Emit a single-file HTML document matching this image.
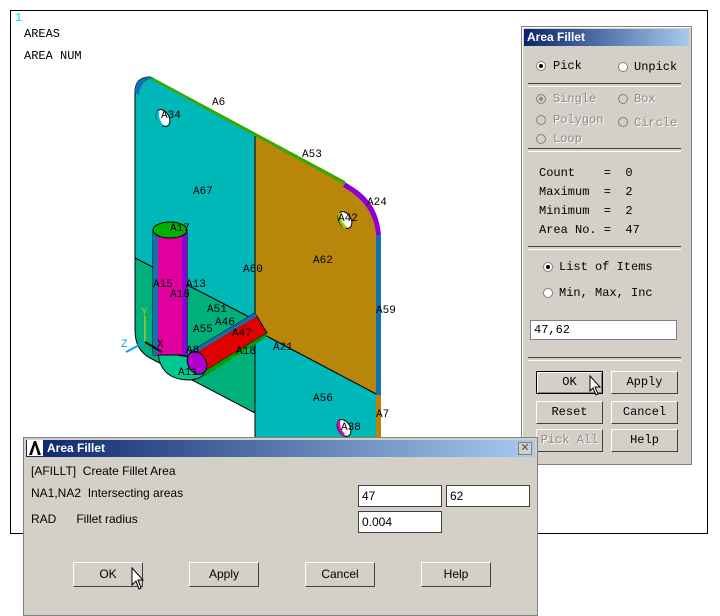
<!DOCTYPE html>
<html><head><style>
body{margin:0;width:720px;height:616px;background:#fff;position:relative;overflow:hidden;font-family:"Liberation Mono",monospace}
.abs{position:absolute}
.panel{left:521px;top:26px;width:169px;height:437px;background:#d4d0c8;border:1px solid #808080;box-shadow:inset 1px 1px #fff}
.ttl{left:2px;top:2px;width:165px;height:17px;background:linear-gradient(90deg,#0a246a,#a6caf0);color:#fff;font:bold 12px "Liberation Sans",sans-serif;line-height:17px;padding-left:3px;box-sizing:border-box}
.m{font:12px "Liberation Mono",monospace;color:#000}
.g{color:#8a8a8a;text-shadow:1px 1px #fff}
.rb{width:10px;height:10px;border-radius:50%;background:#fff;border:1px solid #808080;box-sizing:border-box}
.rb.on::after{content:"";position:absolute;left:2px;top:2px;width:4px;height:4px;border-radius:50%;background:#000}
.rb.gr{background:#d4d0c8}
.rb.gr.on::after{background:#888}
.sep{height:2px;border-top:1px solid #404040;border-bottom:1px solid #fff;left:6px;width:153px}
.btn{width:67px;height:23px;background:#d4d0c8;border:1px solid;border-color:#fff #404040 #404040 #fff;box-sizing:border-box;text-align:center;font:12px "Liberation Mono",monospace;line-height:21px}
.dlg{left:23px;top:437px;width:515px;height:179px;background:#d4d0c8;border:1px solid #808080;box-sizing:border-box}
.s{font:12px "Liberation Sans",sans-serif;color:#000}
.in{background:#fff;border:1px solid #404040;box-sizing:border-box;height:22px;font:12px "Liberation Sans",sans-serif;padding:3px 0 0 3px}
.b2{width:70px;height:25px;background:#d4d0c8;border:1px solid;border-color:#fff #404040 #404040 #fff;box-sizing:border-box;text-align:center;font:12px "Liberation Sans",sans-serif;line-height:23px}
</style></head><body>
<div class="abs" style="left:10px;top:10px;width:698px;height:524px;border:1px solid #000;box-sizing:border-box"></div>
<div class="abs m" style="left:15px;top:11px;color:#00e0e0;font-size:12px">1</div>
<div class="abs m" style="left:24px;top:27px">AREAS</div>
<div class="abs m" style="left:24px;top:49px">AREA NUM</div>
<svg class="abs" style="left:0;top:0" width="720" height="616">
<path d="M135,92 Q135,77 150,77 L255,135 L255,320 L135,258 Z" fill="#00b8b8" stroke="#000" stroke-width="1"/>
<path d="M135,258 L255,320 L255,413 L150,358 Q135,350 135,330 Z" fill="#00b07a" stroke="#000"/>
<path d="M255,135 L345,183 Q376,200 378,235 L378,395 L255,330 Z" fill="#b8860b" stroke="#000"/>
<path d="M255,330 L378,395 L378,445 L255,445 Z" fill="#00b8b8" stroke="#000"/>
<path d="M150,76 L345,181 L347,186 L152,80 Z" fill="#38a800"/>
<path d="M345,183 Q378,198 381,235 L376,235 Q374,204 343,187 Z" fill="#9000d0"/>
<rect x="376" y="235" width="5" height="160" fill="#1070b0"/>
<rect x="376" y="395" width="5" height="45" fill="#c08000"/>
<path d="M135,92 Q135,77 150,77 L154,78 Q140,80 139,95 Z" fill="#1070b0"/>
<ellipse cx="163" cy="118" rx="6" ry="9" transform="rotate(-30 163 118)" fill="#fff" stroke="#000"/>
<path d="M158,112 q-2,6 4,14" stroke="#00b8b8" stroke-width="3" fill="none"/>
<ellipse cx="345" cy="220" rx="6" ry="9" transform="rotate(-30 345 220)" fill="#fff" stroke="#000"/>
<path d="M340,213 q-2,8 6,15" stroke="#a0d000" stroke-width="3" fill="none"/>
<ellipse cx="344" cy="428" rx="6" ry="9" transform="rotate(-30 344 428)" fill="#fff" stroke="#000"/>
<path d="M339,421 q-2,8 5,14" stroke="#e000a0" stroke-width="3" fill="none"/>
<path d="M158,352 Q160,380 190,380 Q210,378 208,360 Z" fill="#00c890" stroke="#000"/>
<rect x="153" y="230" width="34" height="125" fill="#e000a0" stroke="#000"/>
<rect x="153" y="230" width="5" height="125" fill="#1070b0"/>
<rect x="182" y="230" width="5" height="125" fill="#9000d0"/>
<ellipse cx="170" cy="230" rx="17" ry="8" fill="#00b000" stroke="#000"/>
<path d="M190,352 L255,313 L267,333 L203,372 Z" fill="#e00000" stroke="#000"/>
<path d="M190,352 L255,313 L257,316 L192,355Z" fill="#1070b0"/>
<path d="M203,372 L267,333 L265,338 L205,376Z" fill="#00a000"/>
<ellipse cx="197" cy="363" rx="9" ry="12" transform="rotate(-30 197 363)" fill="#b000d0" stroke="#000"/>
<line x1="145" y1="342" x2="145" y2="316" stroke="#e0e000"/>
<line x1="145" y1="342" x2="126" y2="352" stroke="#00a0ff" stroke-width="2"/>
<line x1="145" y1="342" x2="162" y2="352" stroke="#000" stroke-width="2"/>
<g font-family="Liberation Mono,monospace" font-size="11" fill="#000">
<text x="141" y="315" fill="#c0c000">Y</text><text x="121" y="347" fill="#00a0ff">Z</text><text x="157" y="347">X</text>
<text x="212" y="105">A6</text><text x="161" y="118">A34</text><text x="302" y="157">A53</text>
<text x="193" y="194">A67</text><text x="367" y="205">A24</text><text x="338" y="221">A42</text>
<text x="170" y="231">A17</text><text x="243" y="272">A60</text><text x="313" y="263">A62</text>
<text x="153" y="287">A15</text><text x="186" y="287">A13</text><text x="170" y="297">A16</text>
<text x="376" y="313">A59</text><text x="207" y="312">A51</text><text x="193" y="332">A55</text>
<text x="215" y="325">A46</text><text x="232" y="336">A47</text><text x="186" y="353">A8</text>
<text x="236" y="354">A18</text><text x="273" y="350">A21</text><text x="178" y="375">A11</text>
<text x="313" y="401">A56</text><text x="376" y="417">A7</text><text x="341" y="430">A38</text>
</g>
</svg>

<div class="abs panel">
<div class="abs ttl">Area Fillet</div>
<div class="abs rb on" style="left:14px;top:34px"></div><div class="abs m" style="left:31px;top:32px">Pick</div>
<div class="abs rb" style="left:96px;top:35px"></div><div class="abs m" style="left:112px;top:33px">Unpick</div>
<div class="abs sep" style="top:56px"></div>
<div class="abs rb gr on" style="left:14px;top:67px"></div><div class="abs m g" style="left:31px;top:65px">Single</div>
<div class="abs rb gr" style="left:96px;top:67px"></div><div class="abs m g" style="left:112px;top:65px">Box</div>
<div class="abs rb gr" style="left:14px;top:88px"></div><div class="abs m g" style="left:31px;top:86px">Polygon</div>
<div class="abs rb gr" style="left:96px;top:90px"></div><div class="abs m g" style="left:112px;top:89px">Circle</div>
<div class="abs rb gr" style="left:14px;top:107px"></div><div class="abs m g" style="left:31px;top:105px">Loop</div>
<div class="abs sep" style="top:121px"></div>
<div class="abs m" style="left:17px;top:137px;line-height:19px;white-space:pre">Count    =  0
Maximum  =  2
Minimum  =  2
Area No. =  47</div>
<div class="abs sep" style="top:219px"></div>
<div class="abs rb on" style="left:21px;top:235px"></div><div class="abs m" style="left:37px;top:233px">List of Items</div>
<div class="abs rb" style="left:21px;top:261px"></div><div class="abs m" style="left:37px;top:259px">Min, Max, Inc</div>
<div class="abs m" style="left:8px;top:293px;width:147px;height:20px;background:#fff;border:1px solid #808080;box-sizing:border-box;padding:2px 3px">47,62</div>
<div class="abs sep" style="top:330px"></div>
<div class="abs btn" style="left:14px;top:344px;border:1px solid #000;box-shadow:inset 1px 1px #fff,inset -1px -1px #808080">OK</div>
<div class="abs btn" style="left:89px;top:344px">Apply</div>
<div class="abs btn" style="left:14px;top:374px">Reset</div>
<div class="abs btn" style="left:89px;top:374px">Cancel</div>
<div class="abs btn g" style="left:14px;top:402px">Pick All</div>
<div class="abs btn" style="left:89px;top:402px">Help</div>
</div>
<svg class="abs" style="left:589px;top:375px" width="14" height="22"><path d="M1,1 L1,16 L4,13 L7,20 L9,19 L6,12 L11,12 Z" fill="#fff" stroke="#000"/></svg>

<div class="abs dlg">
<div class="abs" style="left:2px;top:2px;width:509px;height:17px;background:linear-gradient(90deg,#0a246a,#a6caf0)"></div>
<div class="abs" style="left:3px;top:2px;width:16px;height:16px;background:#fff"><svg width="16" height="16"><path d="M2,15 L7,1 L9,1 L14,15 L11,15 L8,5 L5,15Z" fill="#000"/></svg></div>
<div class="abs" style="left:23px;top:3px;color:#fff;font:bold 12px 'Liberation Sans',sans-serif">Area Fillet</div>
<div class="abs" style="left:494px;top:4px;width:14px;height:13px;background:#d4d0c8;border:1px solid #808080;box-sizing:border-box;font:11px sans-serif;text-align:center;line-height:11px;color:#555">✕</div>
<div class="abs s" style="left:7px;top:26px">[AFILLT]&nbsp; Create Fillet Area</div>
<div class="abs s" style="left:7px;top:48px">NA1,NA2&nbsp; Intersecting areas</div>
<div class="abs s" style="left:7px;top:74px">RAD&nbsp;&nbsp;&nbsp;&nbsp;&nbsp; Fillet radius</div>
<div class="abs in" style="left:334px;top:47px;width:84px">47</div>
<div class="abs in" style="left:422px;top:47px;width:84px">62</div>
<div class="abs in" style="left:334px;top:73px;width:84px">0.004</div>
<div class="abs b2" style="left:49px;top:124px">OK</div>
<div class="abs b2" style="left:165px;top:124px">Apply</div>
<div class="abs b2" style="left:281px;top:124px">Cancel</div>
<div class="abs b2" style="left:397px;top:124px">Help</div>
</div>
<svg class="abs" style="left:131px;top:567px" width="14" height="24"><path d="M1,1 L1,18 L5,14 L8,22 L10,21 L7,13 L12,13 Z" fill="#fff" stroke="#000"/></svg>
</body></html>
